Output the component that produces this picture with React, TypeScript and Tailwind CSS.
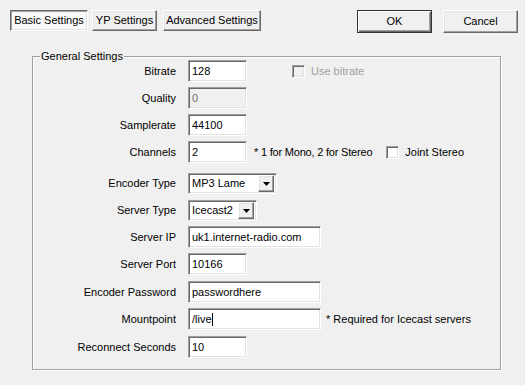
import React from "react";

const raised =
  "border border-t-white border-l-white border-b-[#696969] border-r-[#696969] shadow-[inset_-1px_-1px_0_#a0a0a0,inset_1px_1px_0_#e3e3e3] bg-[#f0f0f0]";
const sunken =
  "border border-t-[#a0a0a0] border-l-[#a0a0a0] border-b-white border-r-white shadow-[inset_1px_1px_0_#696969,inset_-1px_-1px_0_#e3e3e3]";

function Field({ value, w, disabled, caret }: { value: string; w: string; disabled?: boolean; caret?: boolean }) {
  return (
    <div
      className={`${sunken} ${w} h-[22px] flex items-center pl-[3px] ${
        disabled ? "bg-[#f0f0f0] text-[#6d6d6d]" : "bg-white text-black"
      }`}
    >
      <span>{value}</span>
      {caret && <span className="w-px h-[13px] bg-black" />}
    </div>
  );
}

function Combo({ value, w }: { value: string; w: string }) {
  return (
    <div className={`${sunken} ${w} h-[21px] bg-white flex items-center pl-[3px] pr-[2px]`}>
      <span className="flex-1">{value}</span>
      <div className={`${raised} w-[16px] h-[17px] flex items-center justify-center`}>
        <svg width="7" height="4" viewBox="0 0 7 4">
          <path d="M0 0h7L3.5 4z" fill="#000" />
        </svg>
      </div>
    </div>
  );
}

function Check({ label, disabled }: { label: string; disabled?: boolean }) {
  return (
    <div className="flex items-center gap-[6px]">
      <div
        className={`${sunken} w-[13px] h-[13px] ${disabled ? "bg-[#f0f0f0]" : "bg-white"}`}
      />
      <span className={disabled ? "text-[#a0a0a0]" : "text-black"}>{label}</span>
    </div>
  );
}

function Row({ label, mt, children }: { label: string; mt: string; children: React.ReactNode }) {
  return (
    <div className={`flex items-center ${mt}`}>
      <div className="w-[143px] text-right">{label}</div>
      <div className="ml-[12px] flex items-center">{children}</div>
    </div>
  );
}

export default function App() {
  return (
    <div
      className="w-[525px] h-[385px] bg-[#f0f0f0] text-[11px] leading-[13px] text-black overflow-hidden"
      style={{ fontFamily: '"Liberation Sans", Arial, sans-serif' }}
    >
      <div className="flex justify-between pl-[10px] pr-[7px] pt-[10px]">
        <div className="flex gap-[4px]">
          <button className="h-[21px] w-[78px] border border-t-[#696969] border-l-[#696969] border-b-white border-r-white shadow-[inset_1px_1px_0_#a0a0a0,inset_-1px_-1px_0_#e3e3e3] bg-[#f9f9f9]">
            Basic Settings
          </button>
          <button className={`${raised} h-[21px] w-[65px]`}>YP Settings</button>
          <button className={`${raised} h-[21px] w-[98px] ml-[2px]`}>Advanced Settings</button>
        </div>
        <div className="flex gap-[11px]">
          <button className="h-[23px] w-[75px] border border-[#333] bg-[#f0f0f0] shadow-[inset_1px_1px_0_#fff,inset_-1px_-1px_0_#696969,inset_-2px_-2px_0_#a0a0a0]">
            OK
          </button>
          <button className={`${raised} h-[23px] w-[75px]`}>Cancel</button>
        </div>
      </div>

      <div className="relative ml-[32px] mr-[24px] mt-[23px] h-[314px] border border-[#a0a0a0] shadow-[1px_1px_0_#fff,inset_1px_1px_0_#fff] pt-[3px]">
        <span className="absolute left-[7px] -top-[7px] px-[1px] bg-[#f0f0f0]">General Settings</span>

        <Row label="Bitrate" mt="mt-0">
          <Field value="128" w="w-[59px]" />
          <div className="ml-[45px]">
            <Check label="Use bitrate" disabled />
          </div>
        </Row>
        <Row label="Quality" mt="mt-[5px]">
          <Field value="0" w="w-[59px]" disabled />
        </Row>
        <Row label="Samplerate" mt="mt-[5px]">
          <Field value="44100" w="w-[59px]" />
        </Row>
        <Row label="Channels" mt="mt-[5px]">
          <Field value="2" w="w-[59px]" />
          <span className="ml-[7px] tracking-[-0.2px]">* 1 for Mono, 2 for Stereo</span>
          <div className="ml-[14px]">
            <Check label="Joint Stereo" />
          </div>
        </Row>
        <Row label="Encoder Type" mt="mt-[10px]">
          <Combo value="MP3 Lame" w="w-[89px]" />
        </Row>
        <Row label="Server Type" mt="mt-[6px]">
          <Combo value="Icecast2" w="w-[69px]" />
        </Row>
        <Row label="Server IP" mt="mt-[5px]">
          <Field value="uk1.internet-radio.com" w="w-[133px]" />
        </Row>
        <Row label="Server Port" mt="mt-[5px]">
          <Field value="10166" w="w-[59px]" />
        </Row>
        <Row label="Encoder Password" mt="mt-[6px]">
          <Field value="passwordhere" w="w-[133px]" />
        </Row>
        <Row label="Mountpoint" mt="mt-[5px]">
          <Field value="/live" w="w-[133px]" caret />
          <span className="ml-[5px]">* Required for Icecast servers</span>
        </Row>
        <Row label="Reconnect Seconds" mt="mt-[6px]">
          <Field value="10" w="w-[59px]" />
        </Row>
      </div>
    </div>
  );
}
